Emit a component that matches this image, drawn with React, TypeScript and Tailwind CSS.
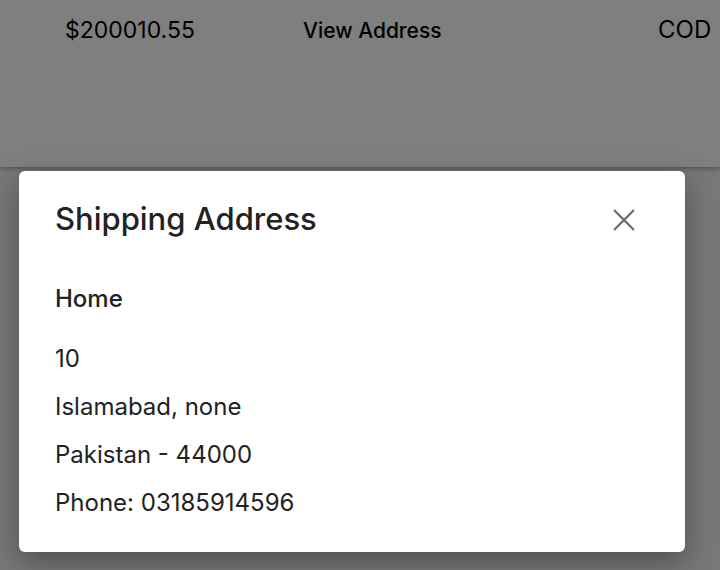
const lines = ["10", "Islamabad, none", "Pakistan - 44000", "Phone: 03185914596"];

function OrderRow() {
    return (
        <div className="h-[167px] bg-white shadow-[0_2px_4px_rgba(0,0,0,0.3)]">
            <div className="flex items-baseline pt-[16px] leading-[28px] text-black">
                <div className="w-[303px] pl-[65px] text-[23px]">$200010.55</div>
                <div className="w-[355px] text-[21px] font-medium">View Address</div>
                <div className="whitespace-nowrap text-[24px]">COD</div>
            </div>
        </div>
    );
}

function CloseIcon() {
    return (
        <svg width="24" height="24" viewBox="0 0 24 24" fill="none" stroke="#6b6b6b" strokeWidth="2.2">
            <path d="M2 2 L22 22 M22 2 L2 22" />
        </svg>
    );
}

function AddressModal() {
    return (
        <div className="absolute inset-0 bg-black/50">
            <div className="pl-[19px] pt-[171px]">
                <div className="h-[381px] w-[666px] rounded-md bg-white px-9 pt-[30px] shadow-[0_10px_30px_rgba(0,0,0,0.35)]">
                    <div className="flex items-center justify-between">
                        <h2 className="text-[31px] leading-[36px] font-medium text-[#222]">Shipping Address</h2>
                        <button className="mr-[13px] mt-[2px]">
                            <CloseIcon />
                        </button>
                    </div>
                    <div className="mt-[47px] text-[24px] leading-[30px] font-medium text-[#222]">Home</div>
                    <div className="mt-[30px] flex flex-col gap-[18px] text-[24px] text-[#222]">
                        {lines.map((l) => (
                            <p key={l} className="leading-[30px]">
                                {l}
                            </p>
                        ))}
                    </div>
                </div>
            </div>
        </div>
    );
}

export default function App() {
    return (
        <div className="relative h-[570px] w-[720px] overflow-hidden bg-[#f0f0f0] font-['Inter',sans-serif]">
            <OrderRow />
            <AddressModal />
        </div>
    );
}
